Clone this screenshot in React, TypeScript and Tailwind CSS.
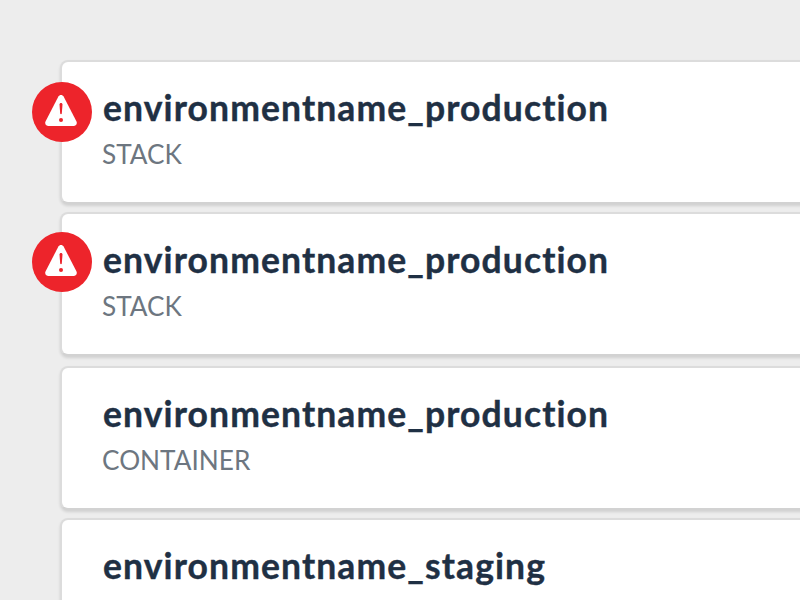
const services = [
  { name: "environmentname_production", kind: "STACK", badge: "top-[20px]" },
  { name: "environmentname_production", kind: "STACK", badge: "top-[18px]" },
  { name: "environmentname_production", kind: "CONTAINER" },
  { name: "environmentname_staging", kind: "CONTAINER" },
];

function AlertBadge({ className }: { className: string }) {
  return (
    <div className={`absolute left-[-30px] flex h-[60px] w-[60px] items-center justify-center rounded-full bg-[#ed242b] ${className}`}>
      <svg width="32" height="31" viewBox="0 0 32 31" className="ml-[-2px] mt-[-3px]">
        <path
          d="M16 0c1.100 0 2 .6 2.600 1.500L31.500 26.500c.9 1.900-.3 4.500-2.500 4.500H3c-2.200 0-3.400-2.600-2.500-4.500L13.400 1.500C14 .6 14.900 0 16 0z"
          fill="#ffffff"
        />
        <path d="M14.500 9.500c0-.8.6-1.500 1.500-1.500s1.500.7 1.500 1.500l-.7 9c-.1.500-.4.800-.8.800s-.7-.3-.8-.8z" fill="#ed242b" />
        <circle cx="16" cy="25" r="2" fill="#ed242b" />
      </svg>
    </div>
  );
}

export default function App() {
  return (
    <div className="h-[600px] w-[800px] overflow-hidden bg-[#ededed] pl-[60px] pt-[60px] font-['Lato',sans-serif]">
      <div className="flex w-[780px] flex-col gap-[8.500px]">
        {services.map((service, index) => (
          <div
            key={index}
            className={`relative h-[143.500px] shrink-0 rounded-[8px] border-2 border-[#dcdcdc] border-b-[#d2d2d2] bg-white pl-[41px] pt-[23px] shadow-[0_2px_3px_rgba(0,0,0,0.12)] ${index === 2 ? "mt-[2px]" : ""}`}
          >
            {service.badge && <AlertBadge className={service.badge} />}
            <div className="text-[35.500px] font-bold leading-[46px] tracking-[1.100px] text-[#1f3044] [-webkit-text-stroke:0.4px_#1f3044] [font-variant-ligatures:none]">
              {service.name}
            </div>
            <div className="ml-[-1px] mt-[5px] text-[26.200px] leading-[36px] text-[#6d7680]">{service.kind}</div>
          </div>
        ))}
      </div>
    </div>
  );
}
